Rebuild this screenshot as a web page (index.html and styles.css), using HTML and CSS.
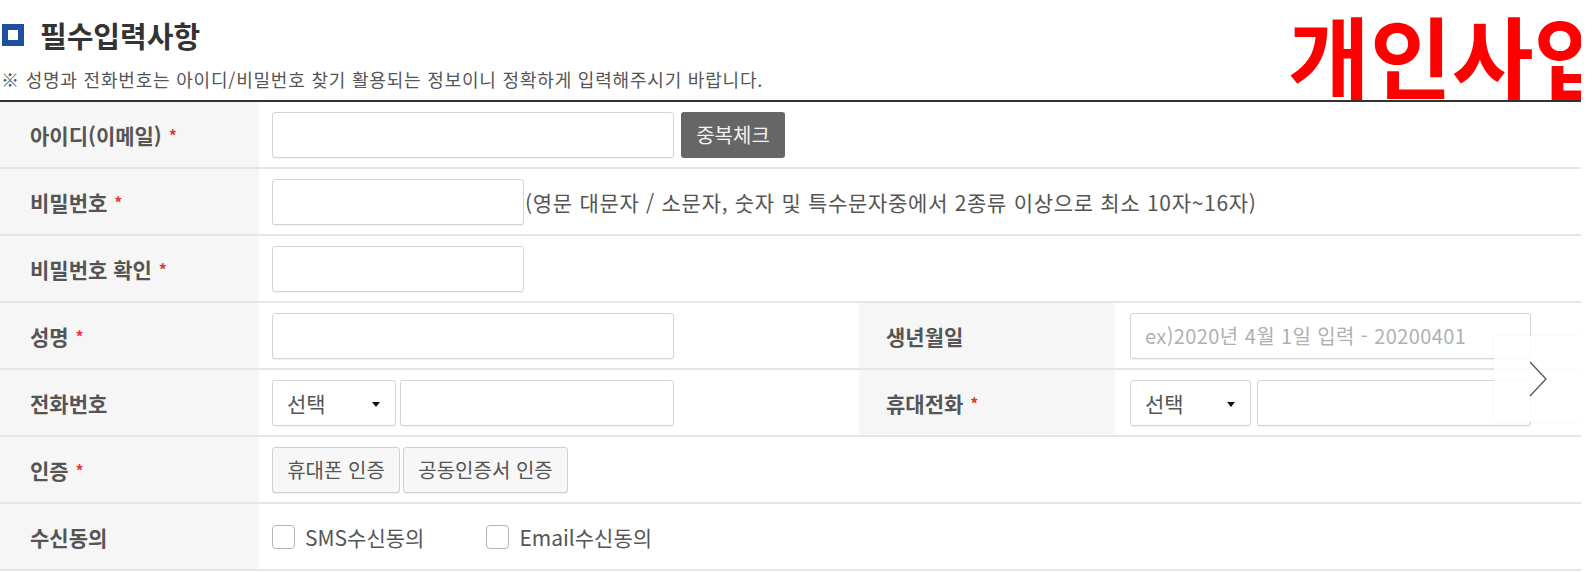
FILE: index.html
```html
<!DOCTYPE html>
<html lang="ko">
<head>
<meta charset="utf-8">
<title>필수입력사항</title>
<link rel="stylesheet" href="styles.css">
</head>
<body>
<div class="wrap">
  <div class="head">
    <h2 class="title"><span class="sq"></span>필수입력사항</h2>
    <p class="note">※ 성명과 전화번호는 아이디/비밀번호 찾기 활용되는 정보이니 정확하게 입력해주시기 바랍니다.</p>
  </div>
  <div class="stamp">개인사업자</div>
  <div class="form">
    <div class="row">
      <div class="lbl">아이디(이메일) <i>*</i></div>
      <div class="fld">
        <input class="inp w402" type="text">
        <button class="btn-dark" type="button">중복체크</button>
      </div>
    </div>
    <div class="row">
      <div class="lbl">비밀번호 <i>*</i></div>
      <div class="fld tight">
        <input class="inp w252" type="password">
        <span class="hint">(영문 대문자 / 소문자, 숫자 및 특수문자중에서 2종류 이상으로 최소 10자~16자)</span>
      </div>
    </div>
    <div class="row">
      <div class="lbl">비밀번호 확인 <i>*</i></div>
      <div class="fld">
        <input class="inp w252" type="password">
      </div>
    </div>
    <div class="row split">
      <div class="lbl">성명 <i>*</i></div>
      <div class="fld">
        <input class="inp w402" type="text">
      </div>
      <div class="lbl">생년월일</div>
      <div class="fld f2">
        <input class="inp w401" type="text" placeholder="ex)2020년 4월 1일 입력 - 20200401">
      </div>
    </div>
    <div class="row split">
      <div class="lbl">전화번호</div>
      <div class="fld g4">
        <div class="sel w124"><span>선택</span></div>
        <input class="inp w274" type="text">
      </div>
      <div class="lbl">휴대전화 <i>*</i></div>
      <div class="fld f2 g6">
        <div class="sel w121"><span>선택</span></div>
        <input class="inp w274" type="text">
      </div>
    </div>
    <div class="row">
      <div class="lbl">인증 <i>*</i></div>
      <div class="fld g3">
        <button class="btn-light w128" type="button">휴대폰 인증</button>
        <button class="btn-light w165" type="button">공동인증서 인증</button>
      </div>
    </div>
    <div class="row">
      <div class="lbl">수신동의</div>
      <div class="fld chk">
        <label class="ck"><input type="checkbox"><span>SMS수신동의</span></label>
        <label class="ck"><input type="checkbox"><span>Email수신동의</span></label>
      </div>
    </div>
  </div>
  <div class="next">
    <svg width="20" height="36" viewBox="0 0 20 36"><path d="M2 1 L18 18 L2 35" fill="none" stroke="#555" stroke-width="1.3"/></svg>
  </div>
</div>
</body>
</html>
```

FILE: styles.css
```css
html, body {
  margin: 0;
  padding: 0;
  background: #fff;
}
body {
  font-family: "Noto Sans CJK KR", "Noto Sans", sans-serif;
  color: #444;
}
.wrap {
  position: relative;
  width: 1581px;
  height: 572px;
  overflow: hidden;
}
.head {
  height: 100px;
  padding-top: 16px;
  box-sizing: border-box;
}
.title {
  margin: 0;
  display: flex;
  align-items: center;
  height: 38px;
  font-size: 29px;
  font-weight: 700;
  color: #333;
  letter-spacing: 0;
}
.sq {
  width: 10px;
  height: 10px;
  border: 6px solid #1f4f9f;
  background: #fff;
  margin: 0 16px 0 2px;
}
.note {
  margin: 14px 0 0 1px;
  font-size: 18px;
  line-height: 22px;
  color: #555;
  letter-spacing: 0.8px;
  white-space: nowrap;
}
.stamp {
  position: absolute;
  left: 1288px;
  top: 4px;
  font-size: 89px;
  line-height: 100px;
  font-weight: 700;
  color: #ff0000;
  white-space: nowrap;
  z-index: 0;
}
.form {
  position: relative;
  z-index: 1;
  border-top: 2px solid #333;
  box-shadow: inset 0 1px 0 #999;
}
.row {
  display: grid;
  grid-template-columns: 259px 1fr;
  height: 67px;
  border-bottom: 2px solid #e6e6e6;
  box-sizing: border-box;
  background: #fff;
}
.row.split {
  grid-template-columns: 259px 600px 256px 1fr;
}
.lbl {
  background: #f6f6f6;
  display: flex;
  align-items: center;
  padding-left: 30px;
  font-size: 21px;
  font-weight: 700;
  color: #555;
  white-space: pre;
}
.lbl i {
  font-style: normal;
  color: #e53935;
  font-size: 16px;
  margin-left: 1px;
}
.split .lbl:nth-child(3) {
  padding-left: 27px;
}
.fld {
  display: flex;
  align-items: center;
  padding-left: 13px;
  gap: 7px;
}
.fld.f2 {
  padding-left: 15px;
}
.fld.tight { gap: 1px; }
.fld.g4 { gap: 4px; }
.fld.g6 { gap: 6px; }
.fld.g3 { gap: 3px; }
.inp {
  height: 46px;
  box-sizing: border-box;
  border: 1px solid #d4d4d4;
  border-radius: 3px;
  background: #fff;
  box-shadow: 0 1px 1px rgba(0,0,0,0.06);
  font-family: inherit;
  font-size: 18px;
  padding: 0 14px;
  color: #333;
  outline: none;
}
.inp::placeholder {
  color: #b0b0b0;
  font-size: 20px;
  letter-spacing: 0.4px;
}
.w402 { width: 402px; }
.w401 { width: 401px; }
.w252 { width: 252px; }
.w274 { width: 274px; }
.w124 { width: 124px; }
.w121 { width: 121px; }
.w128 { width: 128px; }
.w165 { width: 165px; }
.btn-dark {
  width: 104px;
  height: 46px;
  border: 0;
  border-radius: 3px;
  background: #666;
  color: #f2f2f2;
  font-family: inherit;
  font-size: 20px;
  padding: 0;
}
.hint {
  font-size: 21px;
  color: #555;
  letter-spacing: 0.7px;
  white-space: nowrap;
}
.sel {
  position: relative;
  height: 46px;
  box-sizing: border-box;
  border: 1px solid #d4d4d4;
  border-radius: 3px;
  box-shadow: 0 1px 1px rgba(0,0,0,0.06);
  display: flex;
  align-items: center;
  padding-left: 14px;
  font-size: 21px;
  color: #555;
}
.sel::after {
  content: "";
  position: absolute;
  right: 15px;
  top: 21px;
  border-left: 4px solid transparent;
  border-right: 4px solid transparent;
  border-top: 5px solid #111;
}
.btn-light {
  height: 46px;
  box-sizing: border-box;
  border: 1px solid #d0d0d0;
  border-radius: 3px;
  background: #f7f7f7;
  color: #555;
  font-family: inherit;
  font-size: 20px;
  padding: 0;
  box-shadow: 0 1px 1px rgba(0,0,0,0.06);
}
.chk {
  gap: 0;
}
.ck {
  display: flex;
  align-items: center;
  margin-right: 62px;
  font-size: 21px;
  color: #555;
}
.ck input {
  appearance: none;
  -webkit-appearance: none;
  width: 23px;
  height: 24px;
  margin: 0 10px 0 0;
  border: 1.5px solid #b5b5b5;
  border-radius: 4px;
  background: #fff;
}
.next {
  position: absolute;
  left: 1494px;
  top: 336px;
  width: 87px;
  height: 86px;
  background: rgba(255,255,255,0.85);
  box-shadow: 0 0 3px rgba(0,0,0,0.06);
  z-index: 2;
  display: flex;
  align-items: center;
  justify-content: center;
}
```
